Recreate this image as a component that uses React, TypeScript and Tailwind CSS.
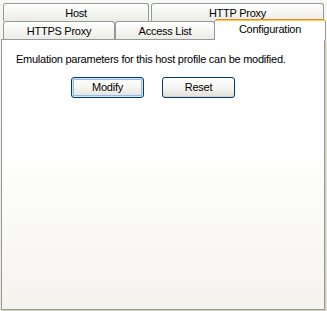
import React from "react";

const font = { fontFamily: '"Liberation Sans", Arial, sans-serif', letterSpacing: "-0.25px" };

function Tab({ label, w, selected }: { label: string; w: string; selected?: boolean }) {
	if (selected) {
		return (
			<div className={`${w} relative z-10 -mt-[2px] -mb-[1px] -ml-[1px] h-[21px] flex flex-col`}>
				<div className="mx-[2px] h-[1px] bg-[#E68B2C]" />
				<div className="mx-[1px] h-[1px] bg-[#FFC73C] border-x border-[#E68B2C]" />
				<div className="h-[1px] bg-[#FFC73C] border-x border-[#E68B2C]" />
				<div className="flex-1 border-x border-[#919B9C] bg-white flex items-center justify-center pb-[2px] text-[11px] text-black">
					{label}
				</div>
			</div>
		);
	}
	return (
		<div
			className={`${w} h-[18px] rounded-t-[3px] border border-b-0 border-[#919B9C] bg-gradient-to-b from-white to-[#ECEBE6] flex items-center justify-center pt-[1px] text-[11px] text-black`}
		>
			{label}
		</div>
	);
}

function Button({ label, def }: { label: string; def?: boolean }) {
	return (
		<div
			className={`h-[21px] w-[73px] rounded-[3px] border border-[#003C74] bg-gradient-to-b from-white via-[#F6F5F2] to-[#E3E1D8] flex items-center justify-center text-[11px] text-black ${
				def ? "shadow-[inset_0_0_0_1px_#CEE7FF,inset_0_0_0_2px_#98B8EA]" : "shadow-[inset_0_-1px_0_#D6D0C5]"
			}`}
		>
			{label}
		</div>
	);
}

export default function App() {
	return (
		<div
			className="w-[327px] h-[311px] bg-gradient-to-b from-[#F7F7F4] to-[#ECE9D8] pt-[3px] pl-[1px] overflow-hidden"
			style={font}
		>
			<div className="flex gap-[2px] pl-[2px]">
				<Tab label="Host" w="w-[146px]" />
				<Tab label="HTTP Proxy" w="w-[173px]" />
			</div>
			<div className="flex pl-[2px]">
				<Tab label="HTTPS Proxy" w="w-[112px]" />
				<Tab label="Access List" w="w-[100px]" />
				<Tab label="Configuration" w="w-[112px]" selected />
			</div>
			<div className="w-[324px] h-[271px] border border-[#919B9C] bg-gradient-to-b from-white from-40% to-[#F4F3EE] shadow-[1px_1px_0_#D0CEBF,2px_2px_0_#E3E0D0] pt-[13px]">
				<p className="pl-[14px] text-[11px] leading-[13px] text-black">
					Emulation parameters for this host profile can be modified.
				</p>
				<div className="flex gap-[18px] pl-[69px] mt-[11px]">
					<Button label="Modify" def />
					<Button label="Reset" />
				</div>
			</div>
		</div>
	);
}
